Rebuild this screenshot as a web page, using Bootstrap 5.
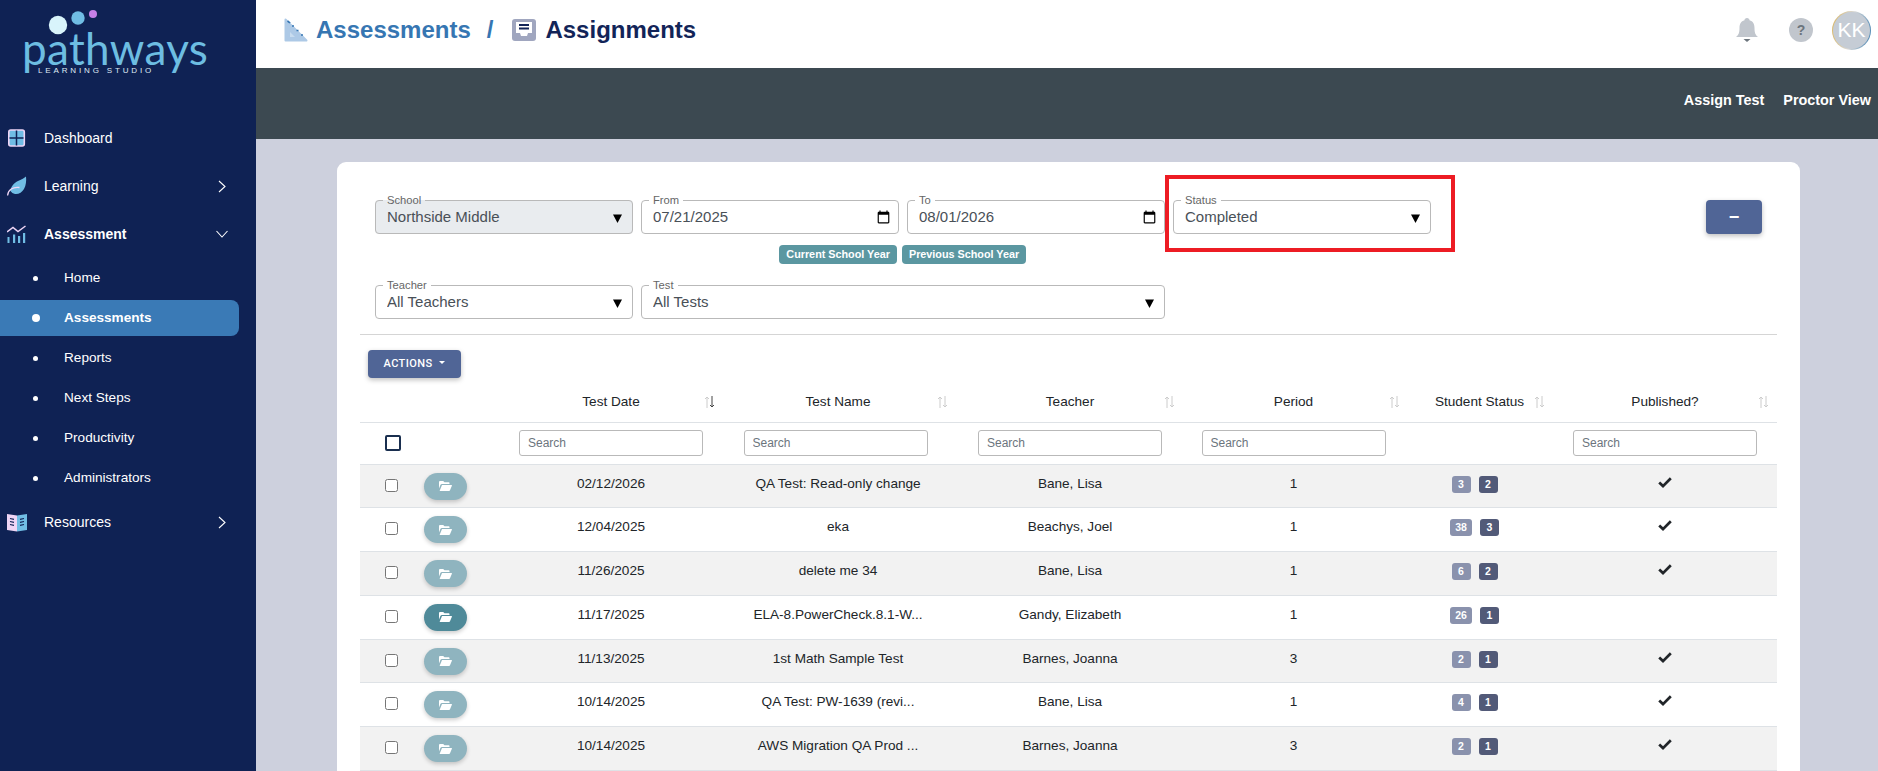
<!DOCTYPE html>
<html lang="en">
<head>
<meta charset="utf-8">
<title>Assignments</title>
<link href="https://cdn.jsdelivr.net/npm/bootstrap@5.3.0/dist/css/bootstrap.min.css" rel="stylesheet">
<style>
html,body{height:771px;overflow:hidden}
body{font-family:"Liberation Sans",Arial,sans-serif;background:#cdd0dd;color:#212529;font-size:13.6px}
.shell{height:771px}
.side{width:256px;flex:none;background:#0f2254;color:#fff}
.logo-box{height:114px;padding-left:22px;flex:none}
.logo-dots{display:block;margin-left:2px}
.logo-word{font-family:Lato,sans-serif;font-weight:400;font-size:44px;line-height:36px;color:#6dbde2;letter-spacing:.35px;height:36px;margin-top:-6px}
.logo-sub{font-size:8px;line-height:10px;letter-spacing:2.85px;color:#dfeaf5;padding-left:16px;margin-top:0;white-space:nowrap}
.side-main{height:48px;flex:none;padding:0 30px 0 7px;font-size:14px;color:#fff;text-decoration:none}
.side-main svg.ic{width:20px;height:22px;margin-right:17px;flex:none}
.side-main.open{font-weight:700}
.side-sub{height:40px;flex:none;padding-left:33px;color:#fff;text-decoration:none;font-size:13.6px}
.side-sub i{display:block;width:5px;height:5px;border-radius:50%;background:#fff;margin-right:26px;flex:none}
.side-sub.on{height:36px;margin:2px 17px 2px 0;background:#3a7ab6;border-radius:0 8px 8px 0;font-weight:700;padding-left:32px}
.side-sub.on i{width:8px;height:8px;margin-right:24px}
.top-bar{height:68px;flex:none;background:#fff;padding:0 7px 8px 28px}
.crumb{font-size:24px;font-weight:700;color:#3676b2;text-decoration:none}
.crumb-here{font-size:24px;font-weight:700;color:#122458;margin-left:1px}
.crumb-sep{font-size:24px;font-weight:700;color:#3676b2;margin:0 19px 0 16px}
.help-dot{width:24px;height:24px;border-radius:50%;background:#c1c6cd;color:#6c757d;font-size:14px;font-weight:700;margin-left:31px}
.avatar{width:39px;height:39px;border-radius:50%;border:1.5px solid transparent;background:linear-gradient(#c5ccd5,#c5ccd5) padding-box,linear-gradient(100deg,#d9b45c,#d9d9d9 50%,#3f7fb0) border-box;color:#fff;font-size:21px;margin-left:19px}
.sub-bar{height:71px;flex:none;background:#3c4951;padding:0 7px 6px 0;gap:19px}
.sub-bar a{color:#fff;font-weight:700;font-size:14.4px;text-decoration:none}
.page{padding:23px 78px 0 81px;min-height:0;overflow:hidden}
.panel{border-radius:9px;background:#fff;padding:32px 23px 0;height:700px}
.filters{padding:0 15px}
.fld{border:1px solid #b9b9b9;border-radius:4px;padding:0 0 5px;width:257.5px;flex:none}
.fld legend{float:none;width:auto;margin:0 0 0 7px;padding:0 4px;font-size:11.2px;line-height:12px;color:#666}
.fld.off{background:#e9ecef}
.fld.wide{width:524px}
.fld .form-select,.fld .form-control{border:0;border-radius:0;box-shadow:none;padding:0 11px;height:22px;min-height:0;line-height:22px;font-size:15px;color:#495057;background-color:transparent;opacity:1;font-family:inherit}
.fld .form-select{background-image:url("data:image/svg+xml,%3Csvg xmlns='http://www.w3.org/2000/svg' viewBox='0 0 9 9'%3E%3Cpath d='M0 .5h9L4.500 9z'/%3E%3C/svg%3E");background-size:9px 9px;background-position:right 10px top 8px;background-repeat:no-repeat;appearance:none}
.fld .form-control::-webkit-calendar-picker-indicator{margin-right:-6px}
.gap-fld{gap:8.5px}
.pair{width:523.5px;flex:none}
.chip{font-size:10.8px;font-weight:700;color:#fff;background:#5b97a1;border-radius:4px;padding:0 7px;height:19px;line-height:19px}
.status-box{position:relative;flex:none}
.red-frame{position:absolute;left:-8px;top:-19px;width:290px;height:77px;border:4px solid #ed1c24;pointer-events:none}
.blue-btn{background:#506596;color:#fff;border:0;border-radius:4px;box-shadow:0 2px 5px rgba(0,0,0,.25)}
.blue-btn:hover{background:#506596;color:#fff}
.minus{width:56px;height:34px;margin-top:6px;font-weight:700;font-size:18px;line-height:34px;padding:0}
.sep{margin:15px 0;border-color:#d5d5d5;opacity:1}
.acts{width:93px;height:28px;padding:0;margin-left:8px;font-family:Roboto,sans-serif;font-weight:500;font-size:11px;letter-spacing:.4px}
.acts::after{margin-left:7px}
.grid{table-layout:fixed;width:1417px;margin:4px 0 0;font-size:13.6px}
.grid th{font-weight:400;height:40px;padding:0;text-align:center;vertical-align:middle;position:relative;border-bottom:1px solid #dee2e6}
.sort{position:absolute;right:10px;top:14px;width:11px;height:12px}
.sort.nudge-d{right:6px}
.sort.nudge-a{right:8px}
.sort.nudge-b{right:7px}
.sort.nudge-c{right:2px}
.grid thead tr+tr td{height:42px;padding:0;text-align:center;vertical-align:middle;border-bottom:1px solid #dee2e6}
.grid thead tr+tr td.lean{padding-right:5px}
.grid tbody td{height:43.8px;padding:9px 4px 0;text-align:center;vertical-align:top;border-bottom:1px solid #dee2e6;line-height:20px}
.grid tbody td.lean{padding-right:10px}
.grid tbody td.bare{padding-left:0;padding-right:0}
.grid thead .form-control{width:184px;height:26px;min-height:0;margin:-1px auto 0;padding:0 8px;font-size:12px;border-color:#b9b9b9;border-radius:3px}
.grid thead .form-control::placeholder{color:#6c757d}
.head-box{display:block;width:16px;height:16px;border:2px solid #1a2f4f;border-radius:2px;margin:0 0 0 25px;appearance:none;background:#fff}
.row-box{display:block;width:13px;height:13px;margin:5px 0 0 25px;appearance:auto;accent-color:#333}
.open-btn{width:43px;height:27px;border-radius:14px;background:#8fb4bf;border:0;padding:0;box-shadow:0 2px 4px rgba(0,0,0,.2);margin:-1px 0 0 -21px}
.open-btn.solid{background:#4f8a99}
.open-btn svg{display:block;margin:0 auto}
.stat{display:inline-block;min-width:19px;height:17px;line-height:17px;border-radius:3px;font-size:10.5px;font-weight:700;color:#fff;padding:0 5px;margin:2px 4px 0;vertical-align:top}
.stat.lt{background:#8a92ad}
.stat.dk{background:#525a78}
.tick{display:block;margin:3px auto 0}
.stud{position:relative;left:2px}
</style>
</head>
<body>
<div class="shell d-flex">
  <aside class="side d-flex flex-column">
    <div class="logo-box">
      <svg class="logo-dots" width="90" height="36" viewBox="24 0 90 36"><circle cx="58" cy="25" r="9.2" fill="#d8f4fb"/><circle cx="78" cy="18" r="6.700" fill="#70bde4"/><circle cx="93" cy="14" r="4" fill="#c680e8"/></svg>
      <div class="logo-word">pathways</div>
      <div class="logo-sub">LEARNING STUDIO</div>
    </div>
    <a class="side-main d-flex align-items-center" href="#">
      <svg class="ic" viewBox="0 0 20 22"><rect x="1.800" y="3" width="15.500" height="16" rx="2" fill="#70bde4" stroke="#eed5f5" stroke-width="1.600"/><path d="M9.500 3.500v15M2.500 11h14" stroke="#0f2254" stroke-width="1.500"/></svg>
      <span>Dashboard</span>
    </a>
    <a class="side-main d-flex align-items-center" href="#">
      <svg class="ic" viewBox="0 0 20 22"><path d="M19 1.500c.5 4 0 9-2 12.500-2 3.500-5.500 5.500-9 5-2-.3-3.500-1.500-4.500-3C4 11 7 8 11 6c3-1.500 6-2.500 8-4.500z" fill="#70bde4"/><path d="M.6 20.500C1 15 6 11.500 12.500 12.500" fill="none" stroke="#eed5f5" stroke-width="1.300"/></svg>
      <span class="flex-grow-1">Learning</span>
      <svg width="8" height="13" viewBox="0 0 8 13"><path d="M1 1l6 5.500-6 5.500" fill="none" stroke="#fff" stroke-width="1.100"/></svg>
    </a>
    <a class="side-main open d-flex align-items-center" href="#">
      <svg class="ic" viewBox="0 0 20 22"><path d="M0 9l6-4.500 5 4 7.500-5.500" fill="none" stroke="#eed5f5" stroke-width="1.500"/><path d="M.5 14h2v6h-2zM6 11.500h2.200V20H6zM11 13h2.200v7H11zM16 10h2.200v10H16z" fill="#70bde4"/></svg>
      <span class="flex-grow-1">Assessment</span>
      <svg width="12" height="8" viewBox="0 0 12 8" style="margin-right:-2px"><path d="M.5 1l5.500 6 5.500-6" fill="none" stroke="#fff" stroke-width="1.100"/></svg>
    </a>
    <a class="side-sub d-flex align-items-center" href="#"><i></i>Home</a>
    <a class="side-sub on d-flex align-items-center" href="#"><i></i>Assessments</a>
    <a class="side-sub d-flex align-items-center" href="#"><i></i>Reports</a>
    <a class="side-sub d-flex align-items-center" href="#"><i></i>Next Steps</a>
    <a class="side-sub d-flex align-items-center" href="#"><i></i>Productivity</a>
    <a class="side-sub d-flex align-items-center" href="#"><i></i>Administrators</a>
    <a class="side-main d-flex align-items-center" href="#">
      <svg class="ic" viewBox="0 0 20 22"><path d="M0 3l10 1.500v16L0 19z" fill="#eed5f5"/><path d="M20 3L10 4.500v16L20 19z" fill="#70bde4"/><path d="M3 7.500l4 .8M3 10.500l4 .8M3 13.500l4 .8M13 8.300l4-.8M13 11.300l4-.8M13 14.300l4-.8" stroke="#0f2254" stroke-width="1.200"/></svg>
      <span class="flex-grow-1">Resources</span>
      <svg width="8" height="13" viewBox="0 0 8 13"><path d="M1 1l6 5.500-6 5.500" fill="none" stroke="#fff" stroke-width="1.100"/></svg>
    </a>
  </aside>
  <div class="flex-grow-1 d-flex flex-column" style="min-width:0">
    <header class="top-bar d-flex align-items-center">
      <svg width="24" height="24" viewBox="0 0 24 24" class="me-2"><path d="M1.500 1.500l21 21h-21z" fill="#adc9e6" stroke="#adc9e6" stroke-width="2" stroke-linejoin="round"/><path d="M6 14l5 5H6z" fill="#c8dcef"/><path d="M3.500 3l2 1.500-.5 .5M8 8l2 0M12.500 12.500l2 0M17 17l2 0" stroke="#3676b2" stroke-width="1.600" fill="none"/></svg>
      <a class="crumb" href="#">Assessments</a>
      <span class="crumb-sep">/</span>
      <svg width="24" height="22" viewBox="0 0 24 22" class="me-2"><rect width="24" height="22" rx="3" fill="#a0a6bf"/><path d="M4 3h16v11h-4l-1 3H9l-1-3H4z" fill="#fff"/><path d="M7 6h10M7 9.500h10" stroke="#122458" stroke-width="2"/></svg>
      <span class="crumb-here">Assignments</span>
      <svg class="ms-auto" width="22" height="25" viewBox="0 0 22 25"><path d="M11 0c1.500 0 2.500 1 2.500 2.200C17 3.200 18.500 6 18.500 10c0 5 1 7 3.500 9H0c2.500-2 3.500-4 3.500-9 0-4 1.500-6.800 5-7.800C8.500 1 9.500 0 11 0z" fill="#c1c6cd"/><path d="M7.500 21h7l-3.500 3z" fill="#6c757d"/></svg>
      <div class="help-dot d-flex align-items-center justify-content-center">?</div>
      <div class="avatar d-flex align-items-center justify-content-center">KK</div>
    </header>
    <div class="sub-bar d-flex align-items-center justify-content-end">
      <a href="#">Assign Test</a>
      <a href="#">Proctor View</a>
    </div>
    <main class="page flex-grow-1">
      <section class="panel">
        <div class="filters">
          <div class="d-flex align-items-start gap-fld">
            <fieldset class="fld off">
              <legend>School</legend>
              <select class="form-select" disabled><option>Northside Middle</option></select>
            </fieldset>
            <div class="pair d-flex flex-column">
              <div class="d-flex gap-fld">
                <fieldset class="fld">
                  <legend>From</legend>
                  <input class="form-control" type="date" value="2025-07-21">
                </fieldset>
                <fieldset class="fld">
                  <legend>To</legend>
                  <input class="form-control" type="date" value="2026-08-01">
                </fieldset>
              </div>
              <div class="d-flex justify-content-center" style="gap:5px;margin-top:11px">
                <span class="chip">Current School Year</span>
                <span class="chip">Previous School Year</span>
              </div>
            </div>
            <div class="status-box">
              <fieldset class="fld">
                <legend>Status</legend>
                <select class="form-select"><option>Completed</option></select>
              </fieldset>
              <div class="red-frame"></div>
            </div>
            <button class="btn blue-btn minus ms-auto" type="button">−</button>
          </div>
          <div class="d-flex align-items-start gap-fld" style="margin-top:15px">
            <fieldset class="fld">
              <legend>Teacher</legend>
              <select class="form-select"><option>All Teachers</option></select>
            </fieldset>
            <fieldset class="fld wide">
              <legend>Test</legend>
              <select class="form-select"><option>All Tests</option></select>
            </fieldset>
          </div>
        </div>
        <hr class="sep">
        <button class="btn blue-btn acts dropdown-toggle" type="button">ACTIONS</button>
        <table class="table table-striped grid">
          <colgroup><col style="width:50px"><col style="width:91px"><col style="width:220px"><col style="width:234px"><col style="width:230px"><col style="width:217px"><col style="width:151px"><col style="width:224px"></colgroup>
          <thead>
            <tr>
              <th></th><th></th>
              <th>Test Date<svg class="sort nudge-d" viewBox="0 0 11 12"><path d="M3 12V1M1 3l2-2 2 2" fill="none" stroke="#ccc"/><path d="M8 0v11M6 9l2 2 2-2" fill="none" stroke="#444"/></svg></th>
              <th>Test Name<svg class="sort nudge-b" viewBox="0 0 11 12"><path d="M3 12V1M1 3l2-2 2 2M8 0v11M6 9l2 2 2-2" fill="none" stroke="#ccc"/></svg></th>
              <th>Teacher<svg class="sort" viewBox="0 0 11 12"><path d="M3 12V1M1 3l2-2 2 2M8 0v11M6 9l2 2 2-2" fill="none" stroke="#ccc"/></svg></th>
              <th>Period<svg class="sort nudge-c" viewBox="0 0 11 12"><path d="M3 12V1M1 3l2-2 2 2M8 0v11M6 9l2 2 2-2" fill="none" stroke="#ccc"/></svg></th>
              <th><span class="stud">Student Status</span><svg class="sort nudge-a" viewBox="0 0 11 12"><path d="M3 12V1M1 3l2-2 2 2M8 0v11M6 9l2 2 2-2" fill="none" stroke="#ccc"/></svg></th>
              <th>Published?<svg class="sort nudge-a" viewBox="0 0 11 12"><path d="M3 12V1M1 3l2-2 2 2M8 0v11M6 9l2 2 2-2" fill="none" stroke="#ccc"/></svg></th>
            </tr>
            <tr>
              <td><input class="head-box" type="checkbox" aria-label="Select all"></td>
              <td></td>
              <td><input class="form-control" placeholder="Search"></td>
              <td class="lean"><input class="form-control" placeholder="Search"></td>
              <td><input class="form-control" placeholder="Search"></td>
              <td><input class="form-control" placeholder="Search"></td>
              <td></td>
              <td><input class="form-control" placeholder="Search"></td>
            </tr>
          </thead>
          <tbody id="rows"></tbody>
        </table>
      </section>
    </main>
  </div>
</div>
<script>
var data=[
["02/12/2026","QA Test: Read-only change","Bane, Lisa","1","3","2",1,0],
["12/04/2025","eka","Beachys, Joel","1","38","3",1,0],
["11/26/2025","delete me 34","Bane, Lisa","1","6","2",1,0],
["11/17/2025","ELA-8.PowerCheck.8.1-W...","Gandy, Elizabeth","1","26","1",0,1],
["11/13/2025","1st Math Sample Test","Barnes, Joanna","3","2","1",1,0],
["10/14/2025","QA Test: PW-1639 (revi...","Bane, Lisa","1","4","1",1,0],
["10/14/2025","AWS Migration QA Prod ...","Barnes, Joanna","3","2","1",1,0]];
var folder='<svg width="13" height="10" viewBox="0 0 13 10"><path d="M0 1.200C0 .5.500 0 1.200 0h3l1.300 1.300h4c.6 0 1 .4 1 1V3H3C2.200 3 1.700 3.400 1.400 4L0 7.500z" fill="#fff"/><path d="M3 4h9.500c.4 0 .6.400.4.800L11 9.300c-.1.400-.5.700-1 .7H.6z" fill="#fff"/></svg>';
var tick='<svg class="tick" width="14" height="11" viewBox="0 0 14 11"><path d="M1.200 5.500l3.800 3.600 7.800-7.800" fill="none" stroke="#212529" stroke-width="2.700"/></svg>';
document.getElementById("rows").innerHTML=data.map(function(r){
return '<tr><td class="bare"><input class="row-box" type="checkbox" aria-label="Select"></td>'+
'<td><button class="open-btn'+(r[7]?' solid':'')+'" type="button">'+folder+'</button></td>'+
'<td>'+r[0]+'</td><td>'+r[1]+'</td><td>'+r[2]+'</td><td>'+r[3]+'</td>'+
'<td class="lean"><span class="stat lt">'+r[4]+'</span><span class="stat dk">'+r[5]+'</span></td>'+
'<td>'+(r[6]?tick:'')+'</td></tr>';}).join("");
</script>
<script src="https://cdn.jsdelivr.net/npm/bootstrap@5.3.0/dist/js/bootstrap.bundle.min.js"></script>
</body>
</html>
